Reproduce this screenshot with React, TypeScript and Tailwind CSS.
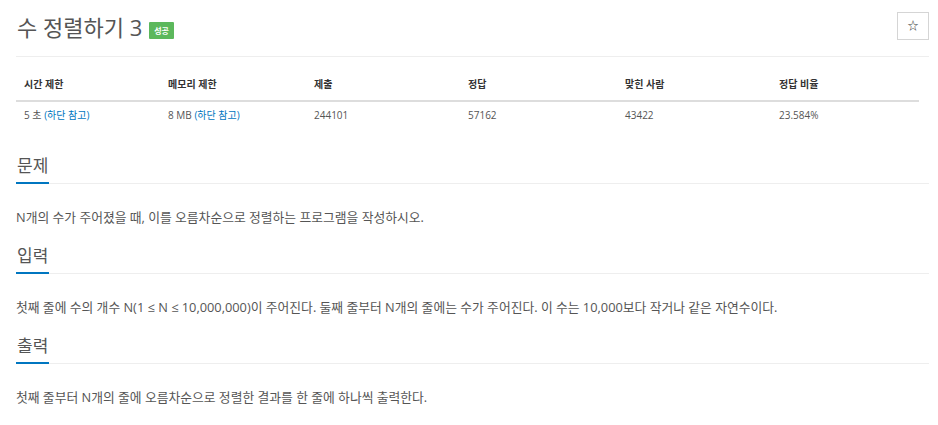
import React from 'react';

const font = { fontFamily: '"Open Sans", "Noto Sans CJK KR", sans-serif' };

const columns = [
    { label: '시간 제한', width: 'w-[144px]' },
    { label: '메모리 제한', width: 'w-[146px]' },
    { label: '제출', width: 'w-[154px]' },
    { label: '정답', width: 'w-[157px]' },
    { label: '맞힌 사람', width: 'w-[154px]' },
    { label: '정답 비율', width: 'w-[148px]' },
];

const Section = ({ title, children }: { title: string; children: React.ReactNode }) => (
    <section>
        <div className="h-[33px] border-b border-[#eeeeee] flex items-end">
            <h2 className="text-[17px] leading-[32px] text-[#555555] border-b-2 border-[#0076c0] -mb-px px-px">
                {title}
            </h2>
        </div>
        <p className="mt-[23px] mb-[14px] text-[12.8px] leading-[20px] text-[#555555]">{children}</p>
    </section>
);

const App = () => {
    return (
        <div className="min-h-screen bg-white pl-4 pr-[9px]" style={font}>
            {/* Title */}
            <div className="flex items-start justify-between h-[57px] border-b border-[#eeeeee]">
                <div className="flex items-center pt-[11px]">
                    <h1 className="text-[22px] leading-[32px] text-[#555555] pl-px">수 정렬하기 3</h1>
                    <span className="ml-[7px] mt-[6px] bg-[#5cb85c] text-white text-[8px] font-bold px-[5px] h-[17px] leading-[17px] rounded-[1px]">
                        성공
                    </span>
                </div>
                <button className="mt-[12px] w-[32px] h-[28px] border border-[#d5d5d5] bg-white text-[#333333] text-[11px] flex items-center justify-center">
                    ☆
                </button>
            </div>

            {/* Info table */}
            <table className="mt-[12px] w-[903px] table-fixed border-collapse text-[10px]">
                <thead>
                    <tr className="h-[32px] border-b-2 border-[#dddddd]">
                        {columns.map(c => (
                            <th key={c.label} className={`${c.width} px-2 text-left font-bold text-[#333333]`}>
                                {c.label}
                            </th>
                        ))}
                    </tr>
                </thead>
                <tbody>
                    <tr className="h-[27px] text-[#555555]">
                        <td className="px-2">
                            5 초 <span className="text-[#0076c0]">(하단 참고)</span>
                        </td>
                        <td className="px-2">
                            8 MB <span className="text-[#0076c0]">(하단 참고)</span>
                        </td>
                        <td className="px-2">244101</td>
                        <td className="px-2">57162</td>
                        <td className="px-2">43422</td>
                        <td className="px-2">23.584%</td>
                    </tr>
                </tbody>
            </table>

            <div className="mt-[23px]">
                <Section title="문제">N개의 수가 주어졌을 때, 이를 오름차순으로 정렬하는 프로그램을 작성하시오.</Section>
                <Section title="입력">
                    첫째 줄에 수의 개수 N(1 ≤ N ≤ 10,000,000)이 주어진다. 둘째 줄부터 N개의 줄에는 수가 주어진다. 이 수는 10,000보다 작거나 같은 자연수이다.
                </Section>
                <Section title="출력">첫째 줄부터 N개의 줄에 오름차순으로 정렬한 결과를 한 줄에 하나씩 출력한다.</Section>
            </div>
        </div>
    );
};

export default App;
